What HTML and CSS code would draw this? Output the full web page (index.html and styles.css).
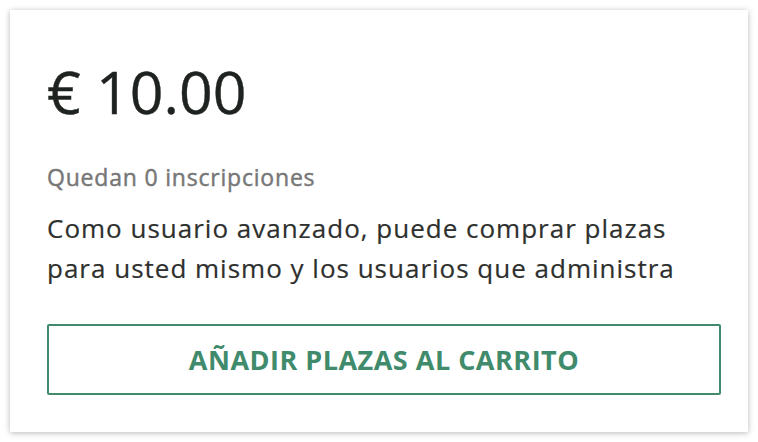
FILE: index.html
```html
<!DOCTYPE html>
<html lang="es">

<head>
  <meta charset="UTF-8">
  <meta name="viewport" content="width=device-width, initial-scale=1.0">
  <title>Plazas</title>
  <link rel="stylesheet" href="styles.css">
</head>

<body>
  <main class="Price-Card">
    <div class="Price-Amount">€ 10.00</div>
    <div class="Price-Remaining">Quedan 0 inscripciones</div>
    <p class="Price-Note">Como usuario avanzado, puede comprar plazas<br>para usted mismo y los usuarios que administra</p>
    <button class="Price-Button" type="button">AÑADIR PLAZAS AL CARRITO</button>
  </main>
</body>

</html>
```

FILE: styles.css
```css
* {
  box-sizing: border-box;
}

body {
  margin: 0;
  padding: 10px;
  background-color: #ffffff;
  font-family: "Open Sans", "Liberation Sans", sans-serif;
}

.Price-Card {
  width: 738px;
  height: 422px;
  padding: 43px 27px 0 37px;
  background-color: #ffffff;
  box-shadow: 0 1px 6px rgba(0, 0, 0, 0.28);
}

.Price-Amount {
  font-size: 59px;
  line-height: 76px;
  color: #1f2320;
  -webkit-text-stroke: 0.4px #1f2320;
}

.Price-Remaining {
  margin-top: 33px;
  font-size: 23px;
  line-height: 30px;
  letter-spacing: 0.8px;
  color: #777777;
  -webkit-text-stroke: 0.45px #777777;
}

.Price-Note {
  margin: 16px 0 0;
  font-size: 26px;
  line-height: 40px;
  letter-spacing: 1px;
  color: #2e302e;
  -webkit-text-stroke: 0.2px #2e302e;
}

.Price-Button {
  display: block;
  width: 100%;
  height: 71px;
  margin-top: 36px;
  border: 2px solid #3f8b6c;
  border-radius: 2px;
  background-color: #ffffff;
  font-family: inherit;
  font-size: 27px;
  font-weight: 700;
  letter-spacing: 0.5px;
  color: #3f8b6c;
}
```
